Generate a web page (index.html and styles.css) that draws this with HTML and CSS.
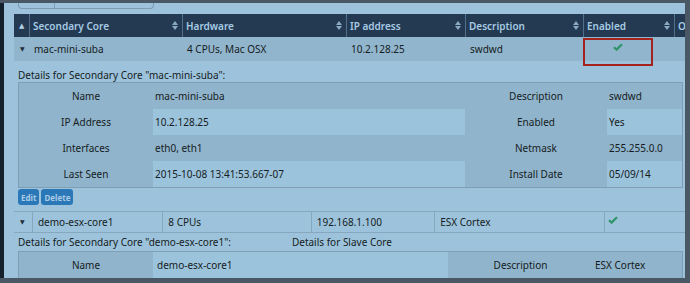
FILE: index.html
```html
<!DOCTYPE html>
<html lang="en">
  <head>
    <meta charset="UTF-8" />
    <title>Secondary Cores</title>
    <link rel="stylesheet" href="styles.css">
  </head>
  <body>
    <div class="screen">
      <div class="search"><span class="search-label">Search:</span></div>

      <div class="thead">
        <div class="th c0"><span class="up">&#9650;</span></div>
        <div class="th c1">Secondary Core<span class="sort"></span></div>
        <div class="th c2">Hardware<span class="sort"></span></div>
        <div class="th c3">IP address<span class="sort"></span></div>
        <div class="th c4">Description<span class="sort"></span></div>
        <div class="th c5">Enabled<span class="sort"></span></div>
        <div class="th c6">O</div>
      </div>

      <div class="row">
        <div class="td c0"><span class="caret">&#9660;</span></div>
        <div class="td c1">mac-mini-suba</div>
        <div class="td c2">4 CPUs, Mac OSX</div>
        <div class="td c3">10.2.128.25</div>
        <div class="td c4">swdwd</div>
        <div class="td c5 ok">
          <svg width="10" height="8" viewBox="0 0 10 8"><path d="M1 4.2 L3.6 6.6 L9 1.2" fill="none" stroke="#2e9467" stroke-width="2.2"/></svg>
        </div>
      </div>

      <div class="details">
        <p class="caption">Details for Secondary Core "mac-mini-suba":</p>
        <table class="info">
          <tr class="dark">
            <th>Name</th><td class="v1">mac-mini-suba</td>
            <th class="l2">Description</th><td>swdwd</td>
          </tr>
          <tr>
            <th>IP Address</th><td class="v1">10.2.128.25</td>
            <th class="l2">Enabled</th><td>Yes</td>
          </tr>
          <tr class="dark">
            <th>Interfaces</th><td class="v1">eth0, eth1</td>
            <th class="l2">Netmask</th><td>255.255.0.0</td>
          </tr>
          <tr>
            <th>Last Seen</th><td class="v1">2015-10-08 13:41:53.667-07</td>
            <th class="l2">Install Date</th><td>05/09/14</td>
          </tr>
        </table>
        <div class="actions">
          <button>Edit</button>
          <button>Delete</button>
        </div>
      </div>

      <div class="subrow">
        <div class="sc s0"><span class="caret">&#9660;</span></div>
        <div class="sc s1">demo-esx-core1</div>
        <div class="sc s2">8 CPUs</div>
        <div class="sc s3">192.168.1.100</div>
        <div class="sc s4">ESX Cortex</div>
        <div class="sc s5 ok">
          <svg width="10" height="8" viewBox="0 0 10 8"><path d="M1 4.2 L3.6 6.6 L9 1.2" fill="none" stroke="#2e9467" stroke-width="2.2"/></svg>
        </div>
      </div>

      <div class="details">
        <p class="caption caption-2"><span>Details for Secondary Core "demo-esx-core1":</span><span class="slave">Details for Slave Core</span></p>
        <table class="info info-2">
          <tr>
            <th>Name</th><td class="v1">demo-esx-core1</td>
            <th class="l2">Description</th><td class="dk">ESX Cortex</td>
          </tr>
        </table>
      </div>

      <div class="highlight"></div>
    </div>
  </body>
</html>
```

FILE: styles.css
```css
body {
  margin: 0;
  background-color: #4a5866;
  font-family: "Noto Sans", "DejaVu Sans", sans-serif;
  font-size: 10px;
  color: #161c22;
}

.screen {
  position: relative;
  margin: 3px 5px 0 4px;
  height: 275px;
  padding-left: 10px;
  overflow: hidden;
  background-color: #9dc3dc;
  box-shadow: -4px 0 0 #14202c;
}

.search {
  display: flex;
  margin: -10px 0 5px 4px;
  width: 136px;
  height: 16px;
  border: 1px solid #7e9cb2;
  border-top: none;
  border-radius: 0 0 4px 4px;
  box-sizing: border-box;
}

.search-label {
  width: 36px;
  padding-left: 4px;
  border-right: 1px solid #7e9cb2;
  line-height: 12px;
  color: #56708a;
  box-sizing: border-box;
}

/* header */
.thead {
  display: flex;
  height: 23px;
  width: 700px;
  background-color: #243a52;
}

.th {
  position: relative;
  display: flex;
  align-items: center;
  padding-left: 3px;
  border-right: 1px solid #52708c;
  color: #a6cbe4;
  font-weight: 600;
  font-size: 10px;
  box-sizing: border-box;
}

.c0 { width: 16px; }
.c1 { width: 153px; }
.c2 { width: 164px; }
.c3 { width: 119px; }
.c4 { width: 118px; }
.c5 { width: 91px; }
.c6 { width: 30px; border-right: none; }

.up {
  font-size: 7px;
  color: #b5d2e6;
  margin-left: 2px;
}

.sort {
  position: absolute;
  right: 4px;
  top: 7px;
  width: 0;
  height: 0;
  border-left: 3px solid transparent;
  border-right: 3px solid transparent;
  border-bottom: 4px solid #8aa9c2;
}

.sort::after {
  content: "";
  position: absolute;
  left: -3px;
  top: 5px;
  border-left: 3px solid transparent;
  border-right: 3px solid transparent;
  border-top: 4px solid #8aa9c2;
}

/* first row */
.row {
  display: flex;
  height: 24px;
  background-color: #91b5cd;
}

.td {
  display: flex;
  align-items: center;
  padding-left: 4px;
  box-sizing: border-box;
}

.caret {
  font-size: 6px;
  color: #1d2b38;
  margin-left: 2px;
}

.ok {
  padding-left: 0;
}

.row .ok svg {
  margin-left: 29px;
  margin-top: -4px;
}

/* details */
.details {
  padding-left: 4px;
}

.caption {
  margin: 0;
  height: 21px;
  line-height: 29px;
}

.caption-2 {
  height: 18px;
  line-height: 18px;
  display: flex;
}

.slave {
  margin-left: 61px;
}

.info {
  width: 665px;
  border-collapse: collapse;
  border: 1px solid #7f9fb6;
  table-layout: fixed;
}

.info th,
.info td {
  height: 26px;
  padding: 0;
  font-weight: normal;
  background-color: #9cc3dc;
}

.info th {
  width: 134px;
  text-align: center;
  background-color: #90b4cc;
}

.info td {
  padding-left: 2px;
}

.info .v1 {
  width: 310px;
}

.info .l2 {
  width: 142px;
}

.info .dark td {
  background-color: #90b4cc;
}

.info-2 .v1 {
  width: 291px;
  padding-left: 4px;
}

.info-2 .l2 {
  width: 145px;
}

.info-2 .dk {
  background-color: #90b4cc;
}

.actions {
  display: flex;
  gap: 2px;
  margin-top: 1px;
  height: 16px;
}

button {
  padding: 0 3px;
  height: 16px;
  border: none;
  border-radius: 3px;
  background-color: #2b78b8;
  color: #a9cae4;
  font-family: "Noto Sans", sans-serif;
  font-size: 8px;
  font-weight: bold;
}

/* nested row */
.subrow {
  display: flex;
  height: 22px;
  margin-top: 6px;
  border-top: 1px solid #86a8bf;
  border-bottom: 1px solid #86a8bf;
  box-sizing: border-box;
}

.sc {
  display: flex;
  align-items: center;
  padding-left: 5px;
  border-right: 1px solid #86a8bf;
  box-sizing: border-box;
}

.s0 { width: 19px; padding-left: 4px; }
.s1 { width: 131px; }
.s2 { width: 149px; }
.s3 { width: 124px; }
.s4 { width: 171px; }
.s5 { width: 80px; border-right: none; padding-left: 3px; }

.subrow .ok svg {
  margin-top: -4px;
}

.highlight {
  position: absolute;
  left: 579px;
  top: 35px;
  width: 66px;
  height: 24px;
  border: 2px solid #a4231f;
}
```
